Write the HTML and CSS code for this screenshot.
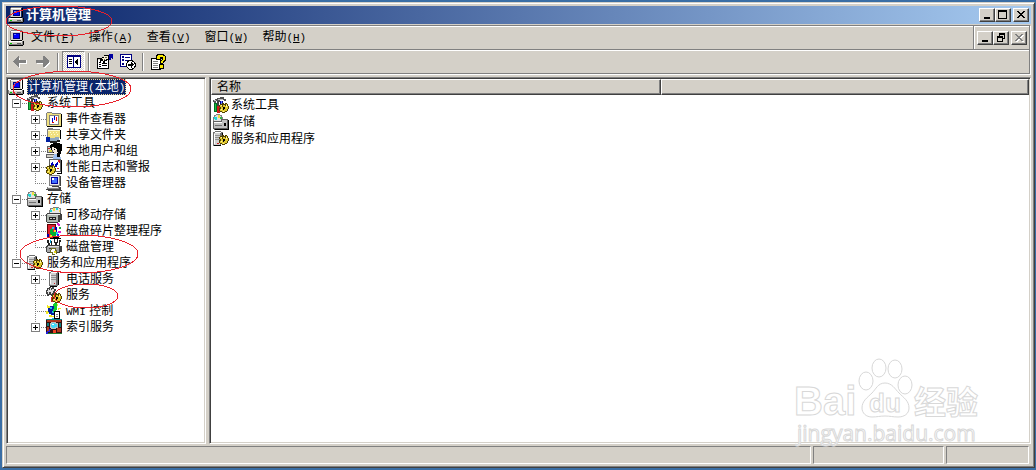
FILE: index.html
```html
<!DOCTYPE html>
<html lang="zh-CN">
  <head>
    <meta charset="utf-8">
    <title>计算机管理</title>
    <link rel="stylesheet" href="styles.css">
  </head>
  <body>
    <svg class="sprite" aria-hidden="true">
      <symbol id="computer" viewBox="0 0 16 16">
        <path fill="#808080" d="M3 0h11v1H3zM2 1h1v9H2zM0 11h15v4H0z"/>
        <path fill="#d4d0c8" d="M3 1h10v9H3zM1 11h13v3H1z"/>
        <path fill="#fff" d="M3 1h10v1H3zM1 11h13v1H1z"/>
        <path fill="#000" d="M14 1h1v9h-1zM3 10h11v1H3zM15 11h1v4h-1zM1 15h14v1H1z"/>
        <path fill="#000080" d="M5 3h7v6H5z"/>
        <path fill="#00f" d="M6 4h5v4H6z"/>
        <path fill="#6080ff" d="M6 4h2v1H6z"/>
        <path fill="#0c0" d="M2 13h2v1H2z"/>
        <path fill="#606060" d="M9 13h4v1H9z"/>
      </symbol>
      <symbol id="gear" viewBox="0 0 10 10">
        <path fill="#504000" d="M1 1h2V0h2v1h1V0h2v1h1v2h1v3H9v2H8v1H6v1H3V9H1V8H0V5h1V4H0V2h1z"/>
        <path fill="#e0c830" d="M1 2h2v2h1V2h2v1h1V1h1v2h1v3H8v2H6v1H3V8H1V6h1V4H1z"/>
        <path fill="#fff8a0" d="M2 2h1v1H2zM7 2h1v2H7zM2 6h1v1H2zM4 8h1v1H4z"/>
        <path fill="#000" d="M4 4h2v2H5v1H4z"/>
      </symbol>
      <symbol id="tools" viewBox="0 0 16 16">
        <path fill="#505050" d="M0 3h2V2h2V1h3V0h4v2h2v2h-2V3H7v2H4V4H3v2H1V5H0z"/>
        <path fill="#c0c0c0" d="M1 3h2v1H1zM5 2h5v1H5z"/>
        <path fill="#404040" d="M4 4h2v5H4z"/>
        <path fill="#007020" d="M1 6h3v9H1z"/>
        <path fill="#20c040" d="M2 7h1v7H2z"/>
        <path fill="#d01818" d="M4 9h3v7H4z"/>
        <path fill="#000090" d="M7 4h3v6H7z"/>
        <path fill="#6080ff" d="M8 4h1v5H8z"/>
        <use href="#gear" x="6" y="6" width="10" height="10"/>
      </symbol>
      <symbol id="events" viewBox="0 0 16 16">
        <path fill="#808080" d="M0 2h1V1h5v1h9v1H1v12H0z"/>
        <path fill="#f0e080" d="M1 2h5v1h9v12H1z"/>
        <path fill="#000" d="M15 3h1v13H1v-1h14z"/>
        <path fill="#808080" d="M3 4h10v10H3z"/>
        <path fill="#fff" d="M4 5h8v8H4z"/>
        <path fill="#00c" d="M8 5h1v4H8zM6 7h1v4H6z"/>
        <path fill="#e00" d="M10 6h1v4h-1zM6 11h2v1H6z"/>
      </symbol>
      <symbol id="share" viewBox="0 0 16 16">
        <path fill="#808080" d="M1 2h1V1h5v1h7v1H2v8H1z"/>
        <path fill="#f0e080" d="M2 3h12v8H2z"/>
        <path fill="#fffbd0" d="M2 3h12v1H2zM4 5h1v1H4zM7 5h1v1H7zM10 5h1v1h-1zM5 7h1v1H5zM8 7h1v1H8zM11 7h1v1h-1z"/>
        <path fill="#000" d="M14 3h1v9h-1z"/>
        <path fill="#0020a0" d="M0 10h4v5H0z"/>
        <path fill="#90a8c0" d="M4 11h5v-1h4v3h-2v1H4z"/>
        <path fill="#202020" d="M4 14h7v-1h3v2h-3v1H4z"/>
      </symbol>
      <symbol id="users" viewBox="0 0 16 16">
        <path fill="#606060" d="M1 3h6v7H1zM0 11h12v4H0z"/>
        <path fill="#d4d0c8" d="M2 4h4v5H2zM1 12h10v2H1z"/>
        <path fill="#d02020" d="M2 5h2v1H2z"/>
        <path fill="#d8d040" d="M3 7h3v2H3z"/>
        <path fill="#000" d="M5 1h2V0h7v1h2v7h-1v3h-1v3h-3v-2H8v-2H7V7H5V5H4V2h1z"/>
        <path fill="#f4e8dc" d="M6 4h2v1h2v1h1v3h1v1h-1v1H8V9H7V7H6z"/>
        <path fill="#000" d="M8 6h1v1H8z"/>
        <path fill="#a0c0f0" d="M8 11h3v3h4v2H7v-3h1z"/>
      </symbol>
      <symbol id="perf" viewBox="0 0 16 16">
        <path fill="#606060" d="M3 0h12v13H3z"/>
        <path fill="#fff" d="M4 1h10v11H4z"/>
        <path fill="#0000c0" d="M4 6h1V4h1V3h1v2h1v2h1V5h1V4h1V3h1v3h-1v2H9v2H8V8H7V6H6v2H4z"/>
        <path fill="#d02020" d="M12 1h2v3h-1V3h-1zM11 9h2v1h-2z"/>
        <path fill="#000" d="M15 1h1v14h-5v-1h4z"/>
        <use href="#gear" x="0" y="6" width="10" height="10"/>
      </symbol>
      <symbol id="device" viewBox="0 0 16 16">
        <path fill="#808080" d="M3 0h11v11H3zM1 12h12v2H1z"/>
        <path fill="#e8e8e8" d="M4 1h9v9H4zM2 12h10v1H2z"/>
        <path fill="#0000a0" d="M5 2h7v7H5z"/>
        <path fill="#4070ff" d="M6 3h5v5H6z"/>
        <path fill="#fff" d="M6 3h2v2H6z"/>
        <path fill="#404040" d="M14 1h1v10h-1zM6 11h7v1H6zM13 12h2v3H0v-1h13zM2 15h14v1H2z"/>
      </symbol>
      <symbol id="storage" viewBox="0 0 16 16">
        <path fill="#808080" d="M3 0h4v1h2v2h1v4H0V3h1V1h2z"/>
        <path fill="#e0e0e0" d="M3 1h4v1h1v5H1V3h1V2h1z"/>
        <path fill="#20d8d8" d="M1 3h3v3H2V5H1z"/>
        <path fill="#f0e040" d="M5 1h2v3H5z"/>
        <path fill="#30b040" d="M7 3h2v2H7z"/>
        <path fill="#606060" d="M0 7h8V5h7v1h1v9h-1v1H1v-1H0z"/>
        <path fill="#c0c0c0" d="M1 8h8V6h5v8H1z"/>
        <path fill="#fff" d="M1 8h8v1H1z"/>
        <path fill="#707070" d="M2 11h7v1H2z"/>
        <path fill="#000" d="M11 9h2v3h-2zM15 6h1v10H2v-1h13z"/>
      </symbol>
      <symbol id="removable" viewBox="0 0 16 16">
        <path fill="#808080" d="M4 1h3V0h6v1h2v5H3V3h1z"/>
        <path fill="#e8e8e8" d="M5 2h3V1h5v1h1v4H4V3h1z"/>
        <path fill="#20d8d8" d="M4 3h2v2H4zM10 1h2v2h-2z"/>
        <path fill="#f0e040" d="M7 1h2v3H7zM13 3h1v2h-1z"/>
        <path fill="#404040" d="M1 6h14v1h1v6h-2v2h-2v1H1v-1H0V7h1z"/>
        <path fill="#b0b8b0" d="M1 7h11v8H1z"/>
        <path fill="#e8e8e8" d="M2 7h12v1H2z"/>
        <path fill="#202020" d="M3 10h7v3H3z"/>
        <path fill="#c0c0c0" d="M4 11h2v1H4zM7 11h2v1H7z"/>
      </symbol>
      <symbol id="defrag" viewBox="0 0 16 16">
        <path fill="#600000" d="M1 1h9v14H1z"/>
        <path fill="#e02030" d="M2 2h7v12H2z"/>
        <path fill="#0000b0" d="M1 11h2v4H1zM9 4h2v5H9z"/>
        <path fill="#00b030" d="M4 6h3v3h3v4H5v-2H4z"/>
        <path fill="#20d0f0" d="M6 4h2v2H6zM10 9h2v3h-2z"/>
        <path fill="#f0e020" d="M4 12h2v2H4zM8 7h2v2H8z"/>
        <path fill="#e020d0" d="M11 0h2v1h1v2h-2V2h-1zM12 8h3v2h-3z"/>
        <path fill="#2020ff" d="M11 11h2v2h-2z"/>
        <path fill="#20a040" d="M13 4h2v2h-2z"/>
        <path fill="#000" d="M4 14h9v1h2v1H4z"/>
      </symbol>
      <symbol id="disk" viewBox="0 0 16 16">
        <path fill="#202020" d="M1 1h2v3h1v2H2V4H1zM5 2h1v4H5zM8 0h1v3h2V0h1v4h-1v2H9V4H8zM13 1h2v2h-1v3h-1z"/>
        <path fill="#00a0d0" d="M4 1h1v3H4z"/>
        <path fill="#404040" d="M1 6h13v1h2v6h-2v1H1v-1H0V7h1z"/>
        <path fill="#a8a8a8" d="M1 8h12v5H1z"/>
        <path fill="#e0e0e0" d="M2 7h11v1H2z"/>
        <path fill="#404040" d="M3 9h6v1H3z"/>
        <path fill="#707020" d="M5 9h5v2h1v4h-2v1H6v-2H4v-3h1z"/>
        <path fill="#fff" d="M6 10h3v3h1v2H7v-2H5v-2h1z"/>
        <path fill="#e8d820" d="M8 12h2v2H8z"/>
      </symbol>
      <symbol id="server" viewBox="0 0 16 16">
        <path fill="#707070" d="M3 1h2V0h7v1h1v13h-1v1H3z"/>
        <path fill="#d0d0d0" d="M4 2h6v12H4z"/>
        <path fill="#fff" d="M5 1h6v1H5zM4 3h1v10H4z"/>
        <path fill="#909090" d="M5 4h5v1H5zM5 6h5v1H5zM5 8h5v1H5z"/>
        <path fill="#000" d="M12 2h1v12h-1v1h-1v1H4v-1h8z"/>
        <path fill="#d02020" d="M8 12h1v1H8z"/>
      </symbol>
      <symbol id="apps" viewBox="0 0 16 16">
        <path fill="#707070" d="M0 1h2V0h6v1h2v12H8v2H0z"/>
        <path fill="#d0d0d0" d="M1 2h6v12H1z"/>
        <path fill="#fff" d="M2 1h6v1H2zM1 3h1v10H1z"/>
        <path fill="#909090" d="M2 4h5v1H2zM2 6h5v1H2zM2 8h5v1H2z"/>
        <path fill="#000" d="M9 2h1v5H9zM1 14h7v1H1z"/>
        <path fill="#d02020" d="M4 12h2v1H4z"/>
        <use href="#gear" x="6" y="4" width="10" height="10"/>
      </symbol>
      <symbol id="services" viewBox="0 0 16 16">
        <path fill="#404040" d="M1 1h2V0h2v1h1V0h2v2h2v2H9v2h1v2H7v1H5V8H3v1H1V7H0V3h1z"/>
        <path fill="#e0e0e0" d="M2 2h1v1h1V1h1v2h1V2h2v2H7v2H6v1H5V5H3v2H2V5H1V4h1z"/>
        <path fill="#d02020" d="M5 10h4v5H5z"/>
        <use href="#gear" x="6" y="6" width="10" height="10"/>
      </symbol>
      <symbol id="wmi" viewBox="0 0 16 16">
        <path fill="#f0e820" d="M1 2h1v1h2v1h2v1H4v1H2V5H1zM0 8h2v1h2v1H2v1H0zM3 12h3v1h2v1H3zM10 1h2v2h-2zM12 5h3v1h-2v1h-1z"/>
        <path fill="#0020a0" d="M4 3h4v2h2v5H8v2H5v-1H3V9H2V5h2z"/>
        <path fill="#20c0f0" d="M4 4h2v2H4zM6 8h2v2H6zM6 15h4v1H6z"/>
        <path fill="#10d030" d="M7 1h1V0h3v7h-1v2H7V6h1V3H7z"/>
        <path fill="#000" d="M8 8h6v8H8z"/>
        <path fill="#fff" d="M9 9h4v6H9z"/>
        <path fill="#808080" d="M10 11h2v1h-2zM10 13h2v1h-2z"/>
      </symbol>
      <symbol id="index" viewBox="0 0 16 16">
        <path fill="#301010" d="M0 1h16v14H0z"/>
        <path fill="#b03820" d="M1 1h14v2H1zM1 8h2v5H1zM11 9h4v4h-4z"/>
        <path fill="#108080" d="M0 0h16v1H0zM1 4h2v3H1zM13 4h2v4h-2z"/>
        <path fill="#208030" d="M0 14h16v1H0z"/>
        <path fill="#c0c0c0" d="M5 3h5v1h2v5h-2v1H5V9H4V4h1z"/>
        <path fill="#40d8f8" d="M6 4h3v1h2v3H9v1H6V8H5V5h1z"/>
        <path fill="#fff" d="M6 5h2v1H6z"/>
        <path fill="#2020e0" d="M3 10h2v1H4v2H2v2H0v-2h1v-1h2z"/>
        <path fill="#f04020" d="M7 11h3v3H7z"/>
      </symbol>
      <symbol id="back" viewBox="0 0 14 12">
        <path fill="#fff" d="M7 1v3h7v4H7v4H6L1 7z"/>
        <path fill="#808080" d="M6 0v4h7v3H6v4H5L0 6V5l5-5z"/>
      </symbol>
      <symbol id="forward" viewBox="0 0 14 12">
        <path fill="#fff" d="M8 1v3H1v4h7v4h1l5-5V6z"/>
        <path fill="#808080" d="M7 0v4H0v3h7v4h1l5-5V5L8 0z"/>
      </symbol>
      <symbol id="panes" viewBox="0 0 14 13">
        <path fill="#000080" d="M0 0h14v13H0z"/>
        <path fill="#fff" d="M1 2h5v10H1zM7 2h6v10H7z"/>
        <path fill="#000" d="M2 4h3v1H2zM2 6h3v1H2zM2 8h3v1H2zM10 4h1v6h-1V9H9V8H8V6h1V5h1z"/>
      </symbol>
      <symbol id="properties" viewBox="0 0 16 16">
        <path fill="#000" d="M0 4h12v11H0z"/>
        <path fill="#fff" d="M1 6h10v8H1z"/>
        <path fill="#d4d0c8" d="M1 5h10v1H1z"/>
        <path fill="#000" d="M2 8h2v1H2zM5 9h5v1H5zM2 10h2v1H2zM5 11h5v1H5zM2 12h2v1H2z"/>
        <path fill="#000" d="M3 5h2V3h2V1h5v5h-2v1H8v2H6V7H4v1H3z"/>
        <path fill="#f8f0d0" d="M5 4h2V2h4v3H9v1H7v1H6V5H5z"/>
        <path fill="#606060" d="M8 3h2v1H8zM7 5h1v1H7z"/>
        <path fill="#0000a0" d="M12 0h4v5h-1V4h-1v2h-2z"/>
      </symbol>
      <symbol id="export" viewBox="0 0 16 16">
        <path fill="#000080" d="M0 0h12v13H0z"/>
        <path fill="#fff" d="M1 1h10v11H1z"/>
        <path fill="#000080" d="M2 2h2v2H2zM5 3h5v1H5zM2 5h2v2H2zM5 6h5v1H5zM2 9h2v2H2z"/>
        <path fill="#000" d="M8 6h5v1h1v1h1v1h1v4h-1v1h-1v1h-1v1H9v-1H8v-1H7v-1H6V9h1V7h1z"/>
        <path fill="#fff" d="M9 7h3v1h2v2h1v2h-1v2h-2v1H9v-1H8v-1H7V9h1V8h1z"/>
        <path fill="#000" d="M8 10h3V8h1v1h1v1h1v1h-1v1h-1v2h-1v-2H8z"/>
      </symbol>
      <symbol id="help" viewBox="0 0 16 16">
        <path fill="#000" d="M0 4h10v12H0z"/>
        <path fill="#fff" d="M1 5h8v10H1z"/>
        <path fill="#808080" d="M2 7h5v1H2zM2 9h5v1H2zM2 11h5v1H2zM2 13h5v1H2z"/>
        <path fill="#000" d="M6 0h7v1h1v1h1v5h-1v1h-1v1h-1v1h1v5H8v-5h1V7h1V6h1V5h-1v1H5V1h1z"/>
        <path fill="#f8e800" d="M7 1h5v1h2v4h-1v1h-1v2h-2V7h1V6h1V3H9v2H6V2h1zM9 11h3v3H9z"/>
      </symbol>
      <symbol id="min" viewBox="0 0 10 10"><path d="M2 7h6v2H2z"/></symbol>
      <symbol id="max" viewBox="0 0 10 10"><path fill-rule="evenodd" d="M0 0h9v9H0zM1 2v6h7V2z"/></symbol>
      <symbol id="restore" viewBox="0 0 10 10">
        <path fill-rule="evenodd" d="M3 0h6v6H7V5h1V2H4v1H3zM1 3h6v6H1zM2 5v3h4V5z"/>
      </symbol>
      <symbol id="close" viewBox="0 0 10 10">
        <path d="M1 1h2v1h1v1h2V2h1V1h2v1H8v1H7v1H6v1h1v1h1v1h1v1H7V7H6V6H4v1H3v1H1V7h1V6h1V5h1V4H3V3H2V2H1z"/>
      </symbol>
    </svg>

    <div class="window">
      <header class="titlebar">
        <svg class="icon"><use href="#computer"/></svg>
        <h1>计算机管理</h1>
        <div class="controls">
          <button class="control" aria-label="最小化"><svg><use href="#min"/></svg></button>
          <button class="control" aria-label="最大化"><svg><use href="#max"/></svg></button>
          <button class="control close" aria-label="关闭"><svg><use href="#close"/></svg></button>
        </div>
      </header>

      <div class="bars">
        <nav class="menubar">
          <svg class="icon"><use href="#computer"/></svg>
          <button class="menu">文件<span class="latin">(<u>F</u>)</span></button>
          <button class="menu">操作<span class="latin">(<u>A</u>)</span></button>
          <button class="menu">查看<span class="latin">(<u>V</u>)</span></button>
          <button class="menu">窗口<span class="latin">(<u>W</u>)</span></button>
          <button class="menu">帮助<span class="latin">(<u>H</u>)</span></button>
          <div class="controls child">
            <button class="control" aria-label="最小化"><svg><use href="#min"/></svg></button>
            <button class="control" aria-label="还原"><svg><use href="#restore"/></svg></button>
            <button class="control close" aria-label="关闭" disabled><svg><use href="#close"/></svg></button>
          </div>
        </nav>
        <div class="toolbar">
          <button class="tool" aria-label="后退" disabled><svg class="arrow"><use href="#back"/></svg></button>
          <button class="tool" aria-label="前进" disabled><svg class="arrow"><use href="#forward"/></svg></button>
          <span class="divider"></span>
          <button class="tool pressed" aria-label="显示控制台树"><svg class="panes-icon"><use href="#panes"/></svg></button>
          <span class="divider"></span>
          <button class="tool" aria-label="属性"><svg class="icon"><use href="#properties"/></svg></button>
          <button class="tool" aria-label="导出列表"><svg class="icon"><use href="#export"/></svg></button>
          <span class="divider"></span>
          <button class="tool" aria-label="帮助"><svg class="icon"><use href="#help"/></svg></button>
        </div>
      </div>

      <main class="panes">
        <section class="pane">
          <div class="row">
            <svg class="icon"><use href="#computer"/></svg>
            <span class="label selected">计算机管理<span class="latin">(</span>本地<span class="latin">)</span></span>
          </div>
          <ul class="tree">
            <li>
              <div class="row"><span class="joint"><button class="expander open" aria-label="折叠"></button></span><svg class="icon"><use href="#tools"/></svg><span class="label">系统工具</span></div>
              <ul>
                <li><div class="row"><span class="joint"><button class="expander" aria-label="展开"></button></span><svg class="icon"><use href="#events"/></svg><span class="label">事件查看器</span></div></li>
                <li><div class="row"><span class="joint"><button class="expander" aria-label="展开"></button></span><svg class="icon"><use href="#share"/></svg><span class="label">共享文件夹</span></div></li>
                <li><div class="row"><span class="joint"><button class="expander" aria-label="展开"></button></span><svg class="icon"><use href="#users"/></svg><span class="label">本地用户和组</span></div></li>
                <li><div class="row"><span class="joint"><button class="expander" aria-label="展开"></button></span><svg class="icon"><use href="#perf"/></svg><span class="label">性能日志和警报</span></div></li>
                <li><div class="row"><span class="joint"></span><svg class="icon"><use href="#device"/></svg><span class="label">设备管理器</span></div></li>
              </ul>
            </li>
            <li>
              <div class="row"><span class="joint"><button class="expander open" aria-label="折叠"></button></span><svg class="icon"><use href="#storage"/></svg><span class="label">存储</span></div>
              <ul>
                <li><div class="row"><span class="joint"><button class="expander" aria-label="展开"></button></span><svg class="icon"><use href="#removable"/></svg><span class="label">可移动存储</span></div></li>
                <li><div class="row"><span class="joint"></span><svg class="icon"><use href="#defrag"/></svg><span class="label">磁盘碎片整理程序</span></div></li>
                <li><div class="row"><span class="joint"></span><svg class="icon"><use href="#disk"/></svg><span class="label">磁盘管理</span></div></li>
              </ul>
            </li>
            <li>
              <div class="row"><span class="joint"><button class="expander open" aria-label="折叠"></button></span><svg class="icon"><use href="#apps"/></svg><span class="label">服务和应用程序</span></div>
              <ul>
                <li><div class="row"><span class="joint"><button class="expander" aria-label="展开"></button></span><svg class="icon"><use href="#server"/></svg><span class="label">电话服务</span></div></li>
                <li><div class="row"><span class="joint"></span><svg class="icon"><use href="#services"/></svg><span class="label">服务</span></div></li>
                <li><div class="row"><span class="joint"></span><svg class="icon"><use href="#wmi"/></svg><span class="label"><span class="latin">WMI</span> 控制</span></div></li>
                <li><div class="row"><span class="joint"><button class="expander" aria-label="展开"></button></span><svg class="icon"><use href="#index"/></svg><span class="label">索引服务</span></div></li>
              </ul>
            </li>
          </ul>
        </section>

        <section class="pane">
          <table class="list">
            <thead>
              <tr><th class="name">名称</th><th></th></tr>
            </thead>
            <tbody>
              <tr><td><div class="entry"><svg class="icon"><use href="#tools"/></svg>系统工具</div></td><td></td></tr>
              <tr><td><div class="entry"><svg class="icon"><use href="#storage"/></svg>存储</div></td><td></td></tr>
              <tr><td><div class="entry"><svg class="icon"><use href="#apps"/></svg>服务和应用程序</div></td><td></td></tr>
            </tbody>
          </table>
        </section>
      </main>

      <footer class="statusbar">
        <div></div>
        <div></div>
        <div></div>
      </footer>
    </div>

    <!-- red pen circles -->
    <svg class="marks" width="150" height="320">
      <ellipse cx="59" cy="21" rx="53" ry="15"/>
      <ellipse cx="72" cy="89" rx="59" ry="18"/>
      <ellipse cx="79" cy="254" rx="59" ry="19"/>
      <ellipse cx="86" cy="296" rx="32" ry="12"/>
    </svg>

    <svg class="watermark" width="200" height="95">
      <ellipse cx="76" cy="26" rx="7" ry="9"/>
      <ellipse cx="89" cy="13" rx="7" ry="9"/>
      <ellipse cx="105" cy="14" rx="7" ry="9"/>
      <ellipse cx="115" cy="30" rx="7" ry="9"/>
      <path d="M95 28c7 0 10 6 14 10 5 5 10 8 10 15 0 6-5 9-11 9-5 0-8-1-13-1s-8 1-13 1c-6 0-10-4-10-9 0-7 5-10 10-15 4-4 6-10 13-10z"/>
      <text class="brand" x="4" y="60">Bai</text>
      <text class="du" x="79" y="57">du</text>
      <text class="jingyan" x="124" y="59">经验</text>
      <text class="site" x="7" y="86">jingyan.baidu.com</text>
    </svg>
  </body>
</html>
```

FILE: styles.css
```css
* {
  box-sizing: border-box;
}

body {
  margin: 0;
  height: 100vh;
  padding: 2px 1px 2px 2px;
  background: #3a6ea5;
  color: #000;
  font: 12px/16px "Liberation Sans", "Noto Sans CJK SC", sans-serif;
  position: relative;
  overflow: hidden;
}

button {
  font: inherit;
  color: inherit;
  border: 0;
  padding: 0;
  background: none;
}

ul {
  list-style: none;
  margin: 0;
  padding: 0;
}

svg {
  display: block;
  flex: none;
  shape-rendering: crispEdges;
}

.sprite {
  position: absolute;
  width: 0;
  height: 0;
}

.icon {
  width: 16px;
  height: 16px;
}

.latin {
  font-family: "Liberation Mono", monospace;
  font-size: 11px;
}

.window {
  display: flex;
  flex-direction: column;
  height: 100%;
  padding: 3px;
  background: #d4d0c8;
  border: 1px solid;
  border-color: #d4d0c8 #404040 #404040 #d4d0c8;
  box-shadow: inset 1px 1px #fff, inset -1px -1px #808080;
}

/* title bar */
.titlebar {
  display: flex;
  align-items: center;
  height: 18px;
  padding: 0 2px;
  background: linear-gradient(to right, #0a246a, #a6caf0);
}

.titlebar h1 {
  margin: 0 0 0 2px;
  color: #fff;
  font-size: 13px;
  line-height: 16px;
}

.controls {
  display: flex;
  align-items: center;
  margin-left: auto;
}

.control {
  display: flex;
  justify-content: center;
  width: 16px;
  height: 14px;
  padding-top: 1px;
  background: #d4d0c8;
  border: 1px solid;
  border-color: #fff #404040 #404040 #fff;
  box-shadow: inset -1px -1px #808080;
}

.control.close {
  margin-left: 2px;
}

.control svg {
  width: 10px;
  height: 10px;
}

.control:disabled svg {
  fill: #808080;
  filter: drop-shadow(1px 1px #fff);
}

/* menu and toolbar */
.bars {
  margin: 1px 1px 3px 0;
  border: 1px solid #808080;
  box-shadow: 1px 1px #fff;
}

.menubar,
.toolbar {
  display: flex;
  align-items: center;
  box-shadow: inset 1px 1px #fff;
}

.menubar {
  height: 24px;
  padding-left: 1px;
  border-bottom: 1px solid #808080;
}

.menu {
  padding: 0 7px;
}

.controls.child {
  align-self: stretch;
  padding: 0 2px 0 3px;
  border-left: 1px solid #808080;
  box-shadow: inset 1px 1px #fff;
}

.toolbar {
  height: 23px;
  padding-left: 1px;
}

.tool {
  display: flex;
  align-items: center;
  justify-content: center;
  width: 23px;
  height: 21px;
}

.tool.pressed {
  background: repeating-conic-gradient(#fff 0 25%, #d4d0c8 0 50%) 0 0 / 2px 2px;
  border: 1px solid;
  border-color: #808080 #fff #fff #808080;
}

.arrow {
  width: 14px;
  height: 12px;
}

.panes-icon {
  width: 14px;
  height: 13px;
}

.divider {
  width: 2px;
  height: 18px;
  margin: 0 3px;
  border-left: 1px solid #808080;
  border-right: 1px solid #fff;
}

/* panes */
.panes {
  flex: 1;
  display: grid;
  grid-template-columns: 200px 1fr;
  gap: 3px;
  min-height: 0;
}

.pane {
  overflow: hidden;
  padding: 1px;
  background: #fff;
  border: 1px solid;
  border-color: #808080 #fff #fff #808080;
  box-shadow: inset 1px 1px #404040, inset -1px -1px #d4d0c8;
}

.row {
  display: flex;
  height: 16px;
  white-space: nowrap;
}

.label {
  margin-left: 3px;
  padding: 0 1px;
}

.label.selected {
  background: #0a246a;
  color: #fff;
  outline: 1px dotted #f5db95;
  outline-offset: -1px;
}

.tree li {
  background: repeating-linear-gradient(#808080 0 1px, transparent 1px 2px) 8px 0 / 1px 100% no-repeat;
}

.tree li:last-child {
  background-size: 1px 8px;
}

.tree ul {
  padding-left: 19px;
}

.joint {
  display: flex;
  align-items: center;
  width: 19px;
  padding-left: 4px;
  background: repeating-linear-gradient(to right, #808080 0 1px, transparent 1px 2px) 8px 8px / 11px 1px no-repeat;
}

.expander {
  width: 9px;
  height: 9px;
  border: 1px solid #808080;
  background:
    linear-gradient(#000, #000) center / 5px 1px no-repeat,
    linear-gradient(#000, #000) center / 1px 5px no-repeat,
    #fff;
}

.expander.open {
  background: linear-gradient(#000, #000) center / 5px 1px no-repeat, #fff;
}

.list {
  width: 100%;
  table-layout: fixed;
  border-collapse: separate;
  border-spacing: 0;
}

.list th {
  height: 16px;
  padding: 0 5px;
  background: #d4d0c8;
  border: 1px solid;
  border-color: #fff #404040 #404040 #fff;
  box-shadow: inset -1px -1px #808080;
  font-weight: normal;
  line-height: 14px;
  text-align: left;
}

.list .name {
  width: 450px;
}

.list td {
  padding: 1px 2px 0;
}

.list tbody tr:first-child td {
  padding-top: 2px;
}

.entry {
  display: flex;
  gap: 2px;
}

/* status bar */
.statusbar {
  display: grid;
  grid-template-columns: 1fr 131px 83px;
  gap: 2px;
  height: 18px;
  margin: 2px 2px 0 0;
}

.statusbar div {
  border: 1px solid;
  border-color: #808080 #fff #fff #808080;
}

/* overlays */
.marks {
  position: absolute;
  top: 0;
  left: 0;
  fill: none;
  stroke: #e8202a;
  pointer-events: none;
}

.watermark {
  position: absolute;
  right: 46px;
  bottom: 20px;
  fill: #fff;
  stroke: #d8d8d8;
  shape-rendering: auto;
  pointer-events: none;
}

.watermark text {
  font-family: "Liberation Sans", "Noto Sans CJK SC", sans-serif;
  font-weight: bold;
}

.brand {
  font-size: 40px;
}

.du {
  font-size: 26px;
}

.jingyan {
  font-size: 32px;
}

.watermark .site {
  font-family: "Open Sans", sans-serif;
  font-size: 21px;
  font-weight: normal;
}
```
